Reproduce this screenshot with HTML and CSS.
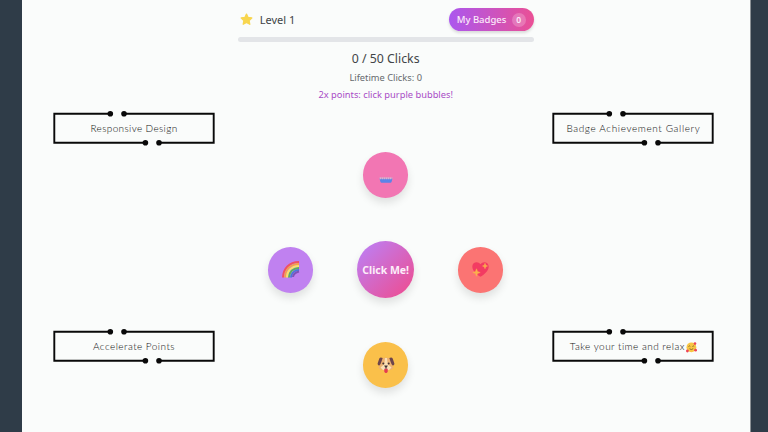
FILE: index.html
```html
<!DOCTYPE html>
<html lang="en">
<head>
<meta charset="utf-8">
<title>Bubble Clicker</title>
<link rel="stylesheet" href="styles.css">
</head>
<body>
<svg class="defs" width="0" height="0" aria-hidden="true">
  <symbol id="frame" viewBox="0 0 162 36">
    <path d="M57 3.8H1.3V32.7H92M71 3.8H160.7V32.7H106" fill="none" stroke="#090909" stroke-width="1.9"/>
    <g fill="#090909"><circle cx="57.3" cy="3.8" r="2.8"/><circle cx="71" cy="3.8" r="2.8"/><circle cx="92.4" cy="32.7" r="2.8"/><circle cx="106" cy="32.7" r="2.8"/></g>
  </symbol>
</svg>
<main class="panel">
  <aside class="side">
    <div class="feature"><svg class="outline"><use href="#frame"/></svg><span class="t-responsive">Responsive Design</span></div>
    <div class="feature"><svg class="outline"><use href="#frame"/></svg><span class="t-points">Accelerate Points</span></div>
  </aside>
  <section class="game">
    <header class="top">
      <div class="level">
        <svg width="13" height="13" viewBox="0 0 13 13"><path d="M6.5 1.1 8.1 4.5 11.8 5 9.1 7.6 9.8 11.3 6.5 9.5 3.2 11.3 3.9 7.6 1.2 5 4.9 4.5Z" fill="#f8d64e" stroke="#f8d64e" stroke-width="1.3" stroke-linejoin="round"/></svg>
        <span>Level 1</span>
      </div>
      <button class="badges"><span class="badges-label">My Badges</span><span class="count">0</span></button>
    </header>
    <div class="progress"></div>
    <div class="clicks">0 / 50 Clicks</div>
    <div class="lifetime">Lifetime Clicks: 0</div>
    <div class="hint">2x points: click purple bubbles!</div>
    <div class="bubbles">
      <div class="bubble pink">
        <svg width="16" height="16" viewBox="0 0 16 16"><path d="M1.500 11.500h13l-1 3.600q-.3.700-1 .7h-9q-.7 0-1-.7z" fill="#5b84e8"/><path d="M1.700 11.300h12.600" stroke="#d5b5ce" stroke-width="2" stroke-dasharray="1.500 .5"/></svg>
      </div>
      <div class="bubble purple">
        <svg width="19" height="19" viewBox="0 0 19 19" fill="none" stroke-width="2"><path d="M2 17.500C2.300 8.500 8 2.200 18 2" stroke="#ef5264"/><path d="M4 17.500C4.200 9.700 9 4.200 18 4" stroke="#f5a24b"/><path d="M6 17.500C6.200 11 10.300 6.300 18 6" stroke="#fae565"/><path d="M8 17.500C8.200 12 12 8.300 18 8" stroke="#58b45d"/><path d="M10 17.500C10.200 13.500 13 10.300 18 10" stroke="#4977d8"/><path d="M12 17C12.300 14.500 14.500 12.300 18 11.500" stroke="#8052b8"/></svg>
      </div>
      <button class="bubble big">Click Me!</button>
      <div class="bubble red">
        <svg width="19" height="19" viewBox="0 0 19 19"><path d="M9.500 16.800C6 14.600 1.300 11 1.300 6.500 1.300 1.800 7.300.800 9.500 4.300 11.700.800 17.700 1.800 17.700 6.500 17.700 11 13 14.600 9.500 16.800Z" fill="#f33b62"/><path d="M5.500 8.800 6.500 11.500 9.200 12.500 6.500 13.500 5.500 16.200 4.500 13.500 1.800 12.500 4.500 11.500ZM14 3.300 14.700 5.300 16.500 6 14.700 6.700 14 8.700 13.300 6.700 11.500 6 13.300 5.300Z" fill="#fbb04c" stroke="#fbb04c" stroke-width=".5"/></svg>
      </div>
      <div class="bubble amber">
        <svg width="18" height="18" viewBox="0 0 18 18"><path d="M5 2.500Q9 .5 13 2.500L15 8.500 16.500 12Q15 14 11.500 14.200H6.500Q3 14 1.500 12L3 8.500Z" fill="#eeb171"/><path d="M8 2H10L10.600 8 14.500 11.500 12 14H6L3.500 11.500 7.400 8Z" fill="#fbe0b5"/><path d="M5.700 2Q3.200 1 2.300 2.500L.6 7.500Q.6 9.700 2.400 9.400 3.500 9 4.500 5.500ZM12.300 2Q14.800 1 15.700 2.500L17.400 7.500Q17.400 9.700 15.600 9.400 14.500 9 13.500 5.500Z" fill="#6d454c"/><path d="M7.300 12.800H10.700V15.500Q10.300 17 9 17 7.700 17 7.300 15.500Z" fill="#e43b50"/><circle cx="6.300" cy="7.600" r="1" fill="#443337"/><circle cx="11.700" cy="7.600" r="1" fill="#443337"/><path d="M7.200 9.500H10.800L10 11.300 9.400 11.700V13H8.600V11.700L8 11.300Z" fill="#443337"/></svg>
      </div>
    </div>
  </section>
  <aside class="side">
    <div class="feature"><svg class="outline"><use href="#frame"/></svg><span class="t-gallery">Badge Achievement Gallery</span></div>
    <div class="feature"><svg class="outline"><use href="#frame"/></svg><span class="t-relax">Take your time and relax</span><svg class="face" width="11" height="11" viewBox="0 0 11 11"><circle cx="5.400" cy="5.300" r="4.900" fill="#f8c744"/><path d="M2.500 4.500Q3.400 3.300 4.300 4.500M6.400 4.500Q7.300 3.300 8.200 4.500M3.500 6.700Q5.300 8.500 7.200 6.700" fill="none" stroke="#75502b" stroke-width=".8"/><g fill="#ee4455"><circle cx="1.400" cy="9" r="1.400"/><circle cx="9.600" cy="8.200" r="1.400"/><circle cx="9" cy="1.600" r="1.300"/></g></svg></div>
  </aside>
</main>
</body>
</html>
```

FILE: styles.css
```css
* { box-sizing: border-box; }

body {
  margin: 0;
  height: 432px;
  overflow: hidden;
  background: #2f3c48;
  font-family: "Noto Sans", "Open Sans", sans-serif;
}

.defs { display: block; height: 0; }

.panel {
  display: grid;
  grid-template-columns: 166px 296px 162px;
  column-gap: 18.700px;
  width: 729px;
  height: 432px;
  margin-left: 22px;
  padding: 0 35px 0 31px;
  background: #fafcfb;
  border-right: 1px solid #8c9296;
}

.side {
  display: flex;
  flex-direction: column;
  gap: 182.300px;
  padding-top: 110px;
}

.feature {
  display: grid;
  grid-template-columns: auto auto;
  justify-content: center;
  align-items: center;
  position: relative;
  width: 162px;
  height: 36px;
  font: 300 10px/12px Lato, "Open Sans", sans-serif;
  color: #111;
  white-space: nowrap;
}

.outline { position: absolute; inset: 0; width: 162px; height: 36px; }
.t-responsive { letter-spacing: .36px; }
.t-points { letter-spacing: .46px; }
.t-gallery { letter-spacing: .62px; }
.t-relax { letter-spacing: .46px; }
.face { margin: 2px 0 0 1px; }

.game { display: flex; flex-direction: column; align-items: center; color: #414447; }

.top {
  display: flex;
  justify-content: space-between;
  align-items: center;
  width: 100%;
  height: 37px;
  padding-top: 2px;
}

.level { display: flex; align-items: center; gap: 7px; padding-left: 2px; font-size: 11px; }

button { border: 0; padding: 0; font-family: inherit; color: #fff; }

.badges {
  display: flex;
  align-items: center;
  justify-content: space-between;
  width: 85px;
  height: 23px;
  padding: 0 8px;
  border-radius: 12px;
  background: linear-gradient(90deg, #ab57ee, #ea5095);
  box-shadow: 0 2px 3px #0002;
  font-size: 9.500px;
  font-weight: 500;
  color: #fbeafa;
  white-space: nowrap;
}

.count {
  width: 14px;
  height: 14px;
  border-radius: 50%;
  background: #ffffff38;
  font-size: 8.500px;
  font-weight: 600;
  line-height: 14px;
  text-align: center;
}

.progress { width: 100%; height: 5px; border-radius: 3px; background: #e3e5e8; }
.clicks { margin-top: 8px; font-size: 12.300px; line-height: 18px; }
.lifetime { margin-top: 3px; font-size: 9.300px; line-height: 14px; color: #65696d; }
.hint { margin-top: 3px; font-size: 9.300px; line-height: 14px; color: #a84bc6; }

.bubbles {
  display: grid;
  grid-template: repeat(3, 95px) / repeat(3, 95px);
  grid-template-areas: ". n ." "w c e" ". s .";
  place-items: center;
  margin-top: 25.400px;
}

.bubble {
  display: flex;
  align-items: center;
  justify-content: center;
  width: 45.500px;
  height: 45.500px;
  border-radius: 50%;
  box-shadow: 0 5px 8px #0000001c;
}

.pink { grid-area: n; background: #f276b3; }
.purple { grid-area: w; background: #c081f0; }
.red { grid-area: e; background: #fb7473; }
.amber { grid-area: s; background: #fac04a; }

.big {
  grid-area: c;
  width: 57px;
  height: 57px;
  background: linear-gradient(135deg, #bf7df0 10%, #e8529c 85%);
  font-size: 10.500px;
  font-weight: 700;
  color: #fdeef9;
  white-space: nowrap;
}
```
